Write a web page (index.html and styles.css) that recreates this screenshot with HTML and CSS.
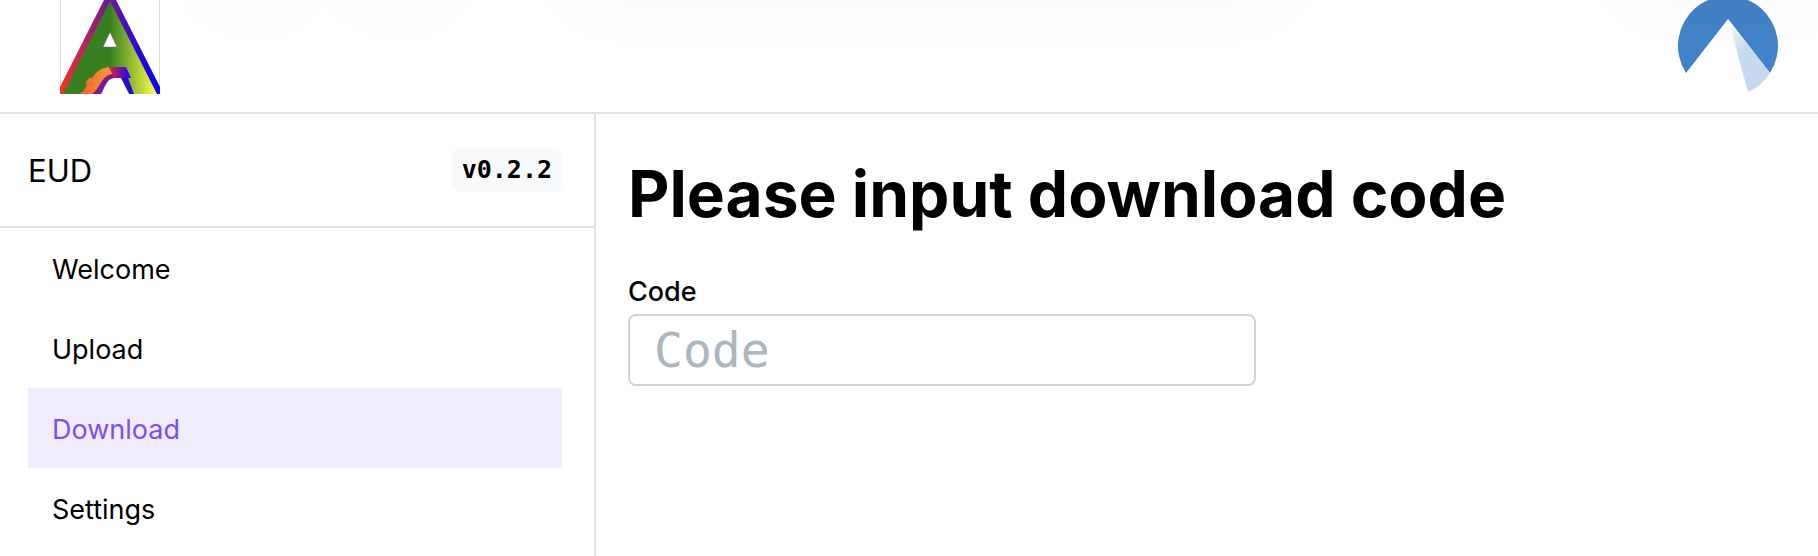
FILE: index.html
```html
<!DOCTYPE html>
<html lang="en">
<head>
<meta charset="utf-8">
<title>EUD</title>
<link rel="stylesheet" href="styles.css">
</head>
<body>
<div class="app">
  <header class="header">
    <svg class="logo" viewBox="0 0 100 100" aria-hidden="true">
      <defs>
        <linearGradient id="edge" x1="0" x2="1"><stop offset="0" stop-color="#ff3020"/><stop offset=".5" stop-color="#6a1896"/><stop offset=".9" stop-color="#1400f0"/></linearGradient>
        <linearGradient id="body" x1="0" x2="1"><stop offset=".5" stop-color="#38801f"/><stop offset="1" stop-color="#ffff4a"/></linearGradient>
        <linearGradient id="orange" x1="0" x2="1"><stop offset="0" stop-color="#f06030"/><stop offset="1" stop-color="#f89c38"/></linearGradient>
        <linearGradient id="bar" x1="0" x2="1"><stop offset="0" stop-color="#e02838"/><stop offset=".85" stop-color="#2a06e0"/></linearGradient>
      </defs>
      <rect x=".5" y=".5" width="99" height="99" fill="#fff" stroke="#d3e3d0"/>
      <path d="M50-6 100 93V100H0V93Z" fill="url(#edge)"/>
      <path d="M50 7 97 100H3Z" fill="url(#body)"/>
      <path d="M50 38 57 53H43Z" fill="#fff" stroke="#6a5090" stroke-width=".5"/>
      <path d="M32 100C38 95 37 84 52 79L60 84H68L74 100H69L60 84H54Z" fill="#2a0cc8"/>
      <path d="M30 100C38 94 36 82 52 79L56 84C46 84 46 95 41 100Z" fill="#78189a"/>
      <path d="M41 100C45 94 46 85 54 84H61L69 100Z" fill="#fff"/>
      <path d="M19 100Q25 97 27 90H25L29 84H32C37 77 41 74 49 73L53 80C41 81 41 94 32 100Z" fill="url(#orange)"/>
      <path d="M49 73H66L71 84H54Z" fill="url(#bar)"/>
    </svg>
    <svg class="logo" viewBox="0 0 100 100" aria-hidden="true">
      <defs>
        <linearGradient id="beam" x1="0" y1="0" x2=".35" y2="1"><stop offset=".05" stop-color="#fff"/><stop offset=".5" stop-color="#c7d9ef"/></linearGradient>
      </defs>
      <path d="M50 25 8 79A50 50 0 1 1 92 79Z" fill="#4282c8"/>
      <path d="M50 25 92 79Q84 92 70 98Z" fill="url(#beam)"/>
    </svg>
    <div class="shades" aria-hidden="true">
      <span class="shade shade-a"></span><span class="shade shade-b"></span><span class="shade shade-c"></span><span class="shade shade-d"></span>
    </div>
  </header>
  <div class="columns">
    <aside class="sidebar">
      <div class="brand">
        <span>EUD</span>
        <code class="version">v0.2.2</code>
      </div>
      <nav class="nav">
        <a class="nav-link" href="#welcome">Welcome</a>
        <a class="nav-link" href="#upload">Upload</a>
        <a class="nav-link active" href="#download" aria-current="page">Download</a>
        <a class="nav-link" href="#settings">Settings</a>
      </nav>
    </aside>
    <main class="main">
      <h1 class="title">Please input download code</h1>
      <label class="label" for="code">Code</label>
      <input class="code-input" id="code" type="text" placeholder="Code">
    </main>
  </div>
</div>
</body>
</html>
```

FILE: styles.css
```css
* { box-sizing: border-box; }

body {
  margin: 0;
  background: #fff;
  color: #000;
  font-family: Inter, sans-serif;
  font-size: 27px;
}

.app {
  display: flex;
  flex-direction: column;
  min-height: 100vh;
}

.header {
  position: relative;
  display: flex;
  justify-content: space-between;
  align-items: flex-end;
  height: 114px;
  padding: 0 40px 18px 60px;
  border-bottom: 2px solid #dee2e6;
  overflow: hidden;
}

.logo {
  flex: none;
  width: 100px;
  height: 100px;
}

/* soft shadows falling in from above the header */
.shades {
  position: absolute;
  inset: 0;
  pointer-events: none;
}

.shade {
  position: absolute;
  top: -60px;
  height: 60px;
  border-radius: 30px;
  box-shadow: 0 0 80px rgba(0, 0, 0, .03);
}

.shade-a { left: 11%; width: 6%; }
.shade-b { left: 19%; width: 6%; }
.shade-c { left: 31%; width: 40%; }
.shade-d { left: 89%; width: 12%; }

.columns {
  display: flex;
  flex: 1;
}

.sidebar {
  flex: none;
  width: 596px;
  border-right: 2px solid #dee2e6;
}

.brand {
  display: flex;
  align-items: center;
  justify-content: space-between;
  height: 114px;
  padding: 0 32px 0 28px;
  border-bottom: 2px solid #dee2e6;
  font-size: 31px;
}

.version {
  padding: 4px 10px;
  border-radius: 8px;
  background: #f8f9fa;
  font: bold 25px/36px "DejaVu Sans Mono", monospace;
}

.nav {
  display: flex;
  flex-direction: column;
  padding: 0 32px 0 28px;
}

.nav-link {
  padding: 4px 24px 0;
  color: #000;
  line-height: 76px;
  text-decoration: none;
}

.nav-link.active {
  background: #f0ecfc;
  color: #7950f2;
}

.main {
  flex: 1;
  padding: 36px 32px;
}

.title {
  margin: 0 0 32px;
  font-size: 64px;
  font-weight: 700;
  line-height: 88px;
}

.label {
  display: block;
  font-weight: 500;
  line-height: 44px;
}

.code-input {
  display: block;
  width: 628px;
  max-width: 100%;
  height: 72px;
  padding: 0 24px;
  border: 2px solid #ced4da;
  border-radius: 8px;
  background: #fff;
  color: #000;
  font: 48px "DejaVu Sans Mono", monospace;
}

.code-input::placeholder {
  color: #adb5bd;
  opacity: 1;
}
```
